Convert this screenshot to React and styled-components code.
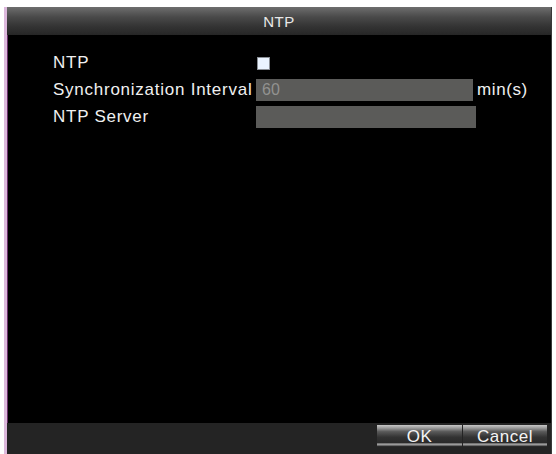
import React from "react";
import styled, { createGlobalStyle } from "styled-components";

const Global = createGlobalStyle`
  html, body { margin: 0; padding: 0; background: #ffffff; }
  body { font-family: "Liberation Sans", Arial, sans-serif; }
`;

const Page = styled.div`
  width: 556px;
  height: 454px;
  padding: 7px 4px 0 4px;
  box-sizing: border-box;
  display: flex;
`;

const Dialog = styled.div`
  flex: 1;
  display: flex;
  flex-direction: column;
  background: #000;
  border-left: 3px solid #dcb8dc;
  box-shadow: inset 1px 0 0 #6a306a;
  border-right: 1px solid #3a3a3a;
`;

const TitleBar = styled.div`
  height: 28px;
  display: flex;
  align-items: center;
  justify-content: center;
  background: linear-gradient(#6e6e6e 0%, #4a4a4a 35%, #333 70%, #262626 100%);
  color: #e8e8e8;
  font-size: 15px;
  letter-spacing: 0.5px;
`;

const Body = styled.div`
  flex: 1;
  padding: 17px 0 0 46px;
`;

const Form = styled.div`
  display: grid;
  grid-template-columns: 203px 221px auto;
  grid-auto-rows: 22px;
  row-gap: 5px;
  justify-content: start;
  align-items: center;
`;

const Label = styled.div`
  color: #f0f0f0;
  font-size: 17px;
  letter-spacing: 0.75px;
  white-space: nowrap;
`;

const Checkbox = styled.div`
  width: 11px;
  height: 11px;
  margin-left: 1px;
  background: #eaf3ff;
  border: 1px solid #8a8f96;
`;

const Field = styled.div`
  width: ${(p) => p.$w}px;
  height: 22px;
  background: #5b5b59;
  color: #929290;
  font-size: 16px;
  display: flex;
  align-items: center;
  padding-left: 6px;
  box-sizing: border-box;
`;

const Unit = styled.div`
  color: #f0f0f0;
  font-size: 17px;
  letter-spacing: 0.6px;
`;

const Footer = styled.div`
  height: 31px;
  background: #242424;
  display: flex;
  justify-content: flex-end;
  align-items: flex-start;
  padding: 2px 4px 0 0;
  box-sizing: border-box;
  gap: 1px;
`;

const Button = styled.div`
  width: ${(p) => p.$w}px;
  height: 22px;
  display: flex;
  align-items: center;
  justify-content: center;
  padding-top: 1px;
  box-sizing: border-box;
  color: #f4f4f4;
  font-size: 17px;
  letter-spacing: 0.5px;
  background: linear-gradient(
    #c8c8c8 0%,
    #9a9a9a 14%,
    #5a5a5a 30%,
    #333 55%,
    #2a2a2a 80%,
    #9a9a9a 86%,
    #9a9a9a 91%,
    #2a2a2a 96%
  );
`;

export default function App() {
  return (
    <>
      <Global />
      <Page>
        <Dialog>
          <TitleBar>NTP</TitleBar>
          <Body>
            <Form>
              <Label>NTP</Label>
              <Checkbox />
              <span />
              <Label>Synchronization Interval</Label>
              <Field $w={217}>60</Field>
              <Unit>min(s)</Unit>
              <Label>NTP Server</Label>
              <Field $w={220} />
              <span />
            </Form>
          </Body>
          <Footer>
            <Button $w={85}>OK</Button>
            <Button $w={84}>Cancel</Button>
          </Footer>
        </Dialog>
      </Page>
    </>
  );
}
